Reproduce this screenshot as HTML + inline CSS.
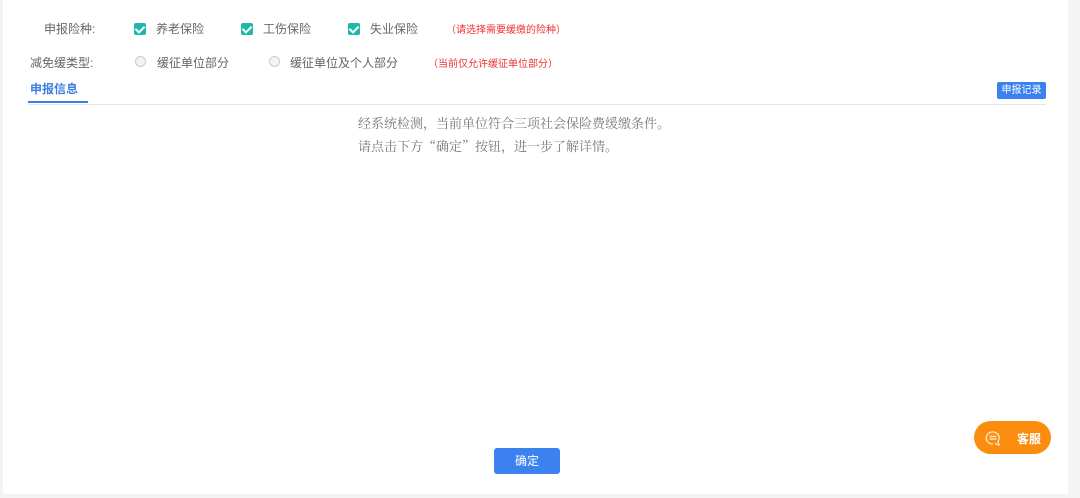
<!DOCTYPE html>
<html><head><meta charset="utf-8"><style>
body{margin:0;width:1080px;height:498px;background:#f4f4f4;position:relative;overflow:hidden;font-family:"Liberation Sans","Noto Sans CJK SC",sans-serif;font-size:12px;color:#666}
#main{position:absolute;left:3px;top:0;width:1065px;height:494px;background:#fff}
.a{position:absolute;white-space:nowrap}
.cb{position:absolute;width:12px;height:12px;background:#1cb8a8;border-radius:2px}
.cb:after{content:"";position:absolute;left:3px;top:1px;width:4px;height:7px;border:solid #fff;border-width:0 2px 2px 0;transform:rotate(45deg)}
.rd{position:absolute;width:9px;height:9px;border:1px solid #ccc;border-radius:50%;background:#f3f3f3}
.red{color:#e33;font-size:10px}
</style></head><body>
<div id="main"></div>
<div class="a" style="left:44px;top:20px">申报险种:</div>
<div class="cb" style="left:134px;top:23px"></div><div class="a" style="left:156px;top:20px">养老保险</div>
<div class="cb" style="left:241px;top:23px"></div><div class="a" style="left:263px;top:20px">工伤保险</div>
<div class="cb" style="left:348px;top:23px"></div><div class="a" style="left:370px;top:20px">失业保险</div>
<div class="a red" style="left:446px;top:21px">（请选择需要缓缴的险种）</div>
<div class="a" style="left:30px;top:54px">减免缓类型:</div>
<div class="rd" style="left:135px;top:56px"></div><div class="a" style="left:157px;top:54px">缓征单位部分</div>
<div class="rd" style="left:269px;top:56px"></div><div class="a" style="left:290px;top:54px">缓征单位及个人部分</div>
<div class="a red" style="left:428px;top:55px">（当前仅允许缓征单位部分）</div>
<div class="a" style="left:30px;top:80px;color:#3d7fe0;font-weight:bold">申报信息</div>
<div class="a" style="left:28px;top:101px;width:60px;height:2px;background:#3d7fe0"></div>
<div class="a" style="left:28px;top:104px;width:1018px;height:1px;background:#e6e6e6"></div>
<div class="a" style="left:997px;top:82px;width:49px;height:17px;background:#3b82f0;border-radius:2px;color:#fff;font-size:10px;line-height:17px;text-align:center">申报记录</div>
<div class="a" style="left:358px;top:111px;font-family:'Noto Serif CJK SC','Liberation Serif',serif;font-size:13px;color:#777;line-height:23px">经系统检测，当前单位符合三项社会保险费缓缴条件。<br>请点击下方“确定”按钮，进一步了解详情。</div>
<div class="a" style="left:494px;top:448px;width:66px;height:26px;background:#3b82f0;border-radius:3px;color:#fff;font-size:12px;line-height:26px;text-align:center">确定</div>
<div class="a" style="left:974px;top:421px;width:77px;height:33px;background:#fb8d0e;border-radius:17px">
<svg style="position:absolute;left:10px;top:8px" width="18" height="18" viewBox="0 0 18 18" fill="none" stroke="#fde3c0" stroke-width="1.4"><path d="M9 15A6.5 6 0 1 1 14 12.5L15 16L11 14.5"/><path d="M5.5 7.5h7M5.5 10h7"/></svg>
<div class="a" style="left:43px;top:9px;color:#fff;font-weight:bold;font-size:12px">客服</div></div>
</body></html>
